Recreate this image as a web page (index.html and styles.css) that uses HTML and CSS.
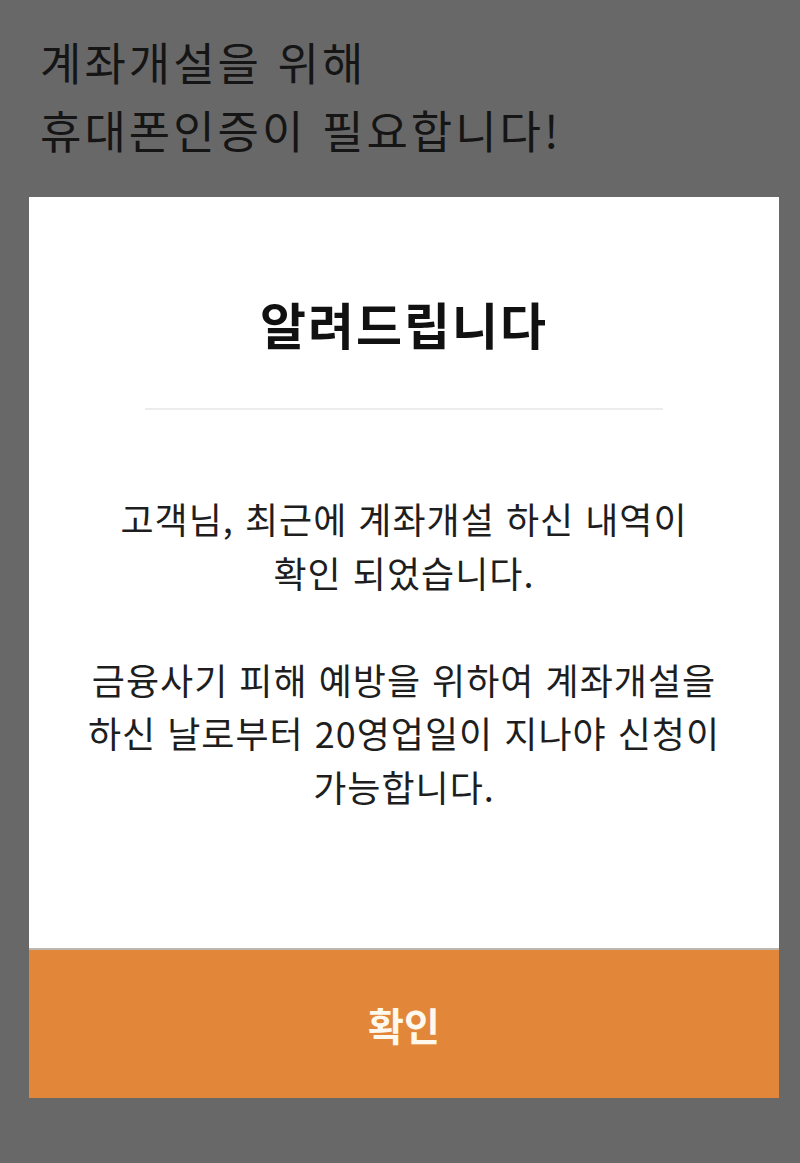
FILE: index.html
```html
<!DOCTYPE html>
<html lang="ko">
<head>
<meta charset="utf-8">
<link rel="stylesheet" href="styles.css">
</head>
<body>
<div class="page">
  <h1 class="headline">계좌개설을 위해<br>휴대폰인증이 필요합니다!</h1>
  <div class="modal">
    <div class="modal-body">
      <h2 class="modal-title">알려드립니다</h2>
      <hr class="divider">
      <p class="message">고객님, 최근에 계좌개설 하신 내역이<br>확인 되었습니다.<br><br>금융사기 피해 예방을 위하여 계좌개설을<br>하신 날로부터 20영업일이 지나야 신청이<br>가능합니다.</p>
    </div>
    <button class="confirm" type="button">확인</button>
  </div>
</div>
</body>
</html>
```

FILE: styles.css
```css
html, body {
  margin: 0;
  padding: 0;
}
body {
  background: #686868;
  font-family: "Noto Sans CJK KR", "Noto Sans", sans-serif;
  width: 800px;
  height: 1163px;
  overflow: hidden;
}
.page {
  display: flex;
  flex-direction: column;
  padding-top: 28px;
}
.headline {
  margin: 0 0 0 40px;
  font-size: 45px;
  font-weight: 400;
  line-height: 68px;
  color: #151515;
  letter-spacing: 3px;
}
.modal {
  margin: 33px 21px 0 29px;
  background: #ffffff;
  display: flex;
  flex-direction: column;
}
.modal-body {
  height: 751px;
  display: flex;
  flex-direction: column;
  align-items: center;
  padding-top: 96px;
  box-sizing: border-box;
}
.modal-title {
  margin: 0;
  font-size: 50px;
  font-weight: 700;
  line-height: 60px;
  color: #111111;
  letter-spacing: 2px;
}
.divider {
  width: 518px;
  border: 0;
  height: 2px;
  background: #ececec;
  margin: 55px 0 0 0;
}
.message {
  margin: 82px 0 0 0;
  font-size: 36px;
  line-height: 53.5px;
  letter-spacing: 1px;
  text-align: center;
  color: #1e1e1e;
}
.confirm {
  height: 150px;
  border: 0;
  border-top: 2px solid #bdb6ae;
  background: #e2873a;
  color: #fff8ec;
  font-family: "Noto Sans CJK KR", "Noto Sans", sans-serif;
  font-size: 39px;
  font-weight: 700;
  padding: 0;
  margin: 0;
}
```
